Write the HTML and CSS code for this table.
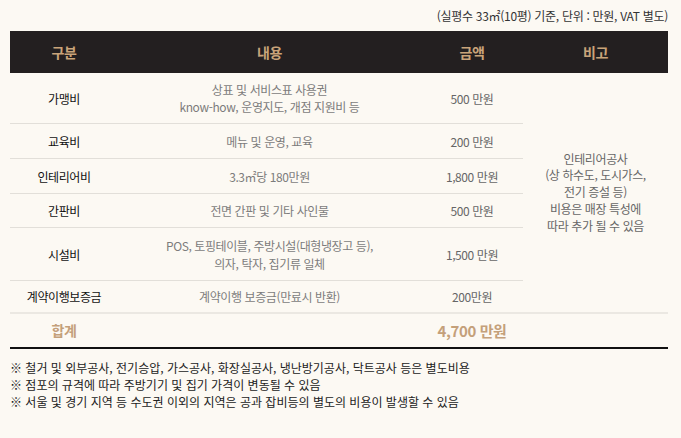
FILE: index.html
```html
<!DOCTYPE html>
<html lang="ko">

<head>
    <meta charset="UTF-8">
    <title>창업비용</title>
    <link rel="stylesheet" href="styles.css">
</head>

<body>
    <div class="cost">
        <p class="unit">(실평수 33㎡(10평) 기준, 단위 : 만원, VAT 별도)</p>
        <table class="cost-table">
            <thead>
                <tr>
                    <th class="c1">구분</th>
                    <th class="c2">내용</th>
                    <th class="c3">금액</th>
                    <th class="c4">비고</th>
                </tr>
            </thead>
            <tbody>
                <tr>
                    <td class="name">가맹비</td>
                    <td class="desc">상표 및 서비스표 사용권<br>know-how, 운영지도, 개점 지원비 등</td>
                    <td class="price">500 만원</td>
                    <td class="note" rowspan="6">인테리어공사<br>(상 하수도, 도시가스,<br>전기 증설 등)<br>비용은 매장 특성에<br>따라 추가 될 수 있음</td>
                </tr>
                <tr class="wide">
                    <td class="name">교육비</td>
                    <td class="desc">메뉴 및 운영, 교육</td>
                    <td class="price">200 만원</td>
                </tr>
                <tr class="wide">
                    <td class="name">인테리어비</td>
                    <td class="desc">3.3㎡당 180만원</td>
                    <td class="price">1,800 만원</td>
                </tr>
                <tr>
                    <td class="name">간판비</td>
                    <td class="desc">전면 간판 및 기타 사인물</td>
                    <td class="price">500 만원</td>
                </tr>
                <tr class="tall">
                    <td class="name">시설비</td>
                    <td class="desc">POS, 토핑테이블, 주방시설(대형냉장고 등),<br>의자, 탁자, 집기류 일체</td>
                    <td class="price">1,500 만원</td>
                </tr>
                <tr class="last">
                    <td class="name">계약이행보증금</td>
                    <td class="desc">계약이행 보증금(만료시 반환)</td>
                    <td class="price">200만원</td>
                </tr>
            </tbody>
            <tfoot>
                <tr>
                    <td class="sum">합계</td>
                    <td></td>
                    <td class="sum total">4,700 만원</td>
                    <td></td>
                </tr>
            </tfoot>
        </table>
        <ul class="remarks">
            <li>※ 철거 및 외부공사, 전기승압, 가스공사, 화장실공사, 냉난방기공사, 닥트공사 등은 별도비용</li>
            <li>※ 점포의 규격에 따라 주방기기 및 집기 가격이 변동될 수 있음</li>
            <li>※ 서울 및 경기 지역 등 수도권 이외의 지역은 공과 잡비등의 별도의 비용이 발생할 수 있음</li>
        </ul>
    </div>
</body>

</html>
```

FILE: styles.css
```css
body {
    margin: 0;
    background: #fcf9f3;
    font-family: "Noto Sans CJK KR", "Noto Sans", sans-serif;
    font-size: 12px;
    letter-spacing: -0.4px;
    color: #222;
}

.cost {
    width: 658px;
    margin-left: 10px;
}

.unit {
    margin: 7px 0 6px;
    line-height: 18px;
    text-align: right;
    letter-spacing: -0.3px;
    color: #333;
}

.cost-table {
    width: 100%;
    border-collapse: collapse;
    table-layout: fixed;
}

.cost-table th {
    height: 42px;
    padding: 0;
    background: #231f20;
    color: #c9a47a;
    font-size: 14px;
    font-weight: 700;
}

.c1 { width: 108px; }
.c2 { width: 303px; }
.c3 { width: 102px; }

.cost-table td {
    padding: 8px 0;
    line-height: 17px;
    text-align: center;
    border-bottom: 1px solid #e2dfd9;
}

/* 한 줄 행 높이 보정 */
.cost-table tr.wide td {
    padding: 9px 0 8px;
}

.cost-table tr.tall td {
    padding: 9px 0 8px;
    line-height: 17.5px;
}

.cost-table tr.last td {
    padding: 7px 0;
    border-bottom: 2px solid #ebe8e2;
}

.cost-table td.name {
    color: #111;
}

.cost-table td.desc {
    color: #7c7c7c;
}

.cost-table td.price {
    color: #666;
}

.cost-table td.note {
    padding: 0;
    color: #666;
    line-height: 16.8px;
    border-bottom: 2px solid #ebe8e2;
}

.cost-table tfoot td {
    height: 35px;
    padding: 0;
    box-sizing: border-box;
    border-bottom: 2px solid #111;
}

.cost-table td.sum {
    color: #c4a07a;
    font-weight: 700;
    font-size: 14px;
}

.cost-table td.total {
    font-size: 15px;
}

.remarks {
    margin: 10px 0 0;
    padding: 0;
    list-style: none;
    line-height: 17px;
    color: #222;
    letter-spacing: 0;
}
```
